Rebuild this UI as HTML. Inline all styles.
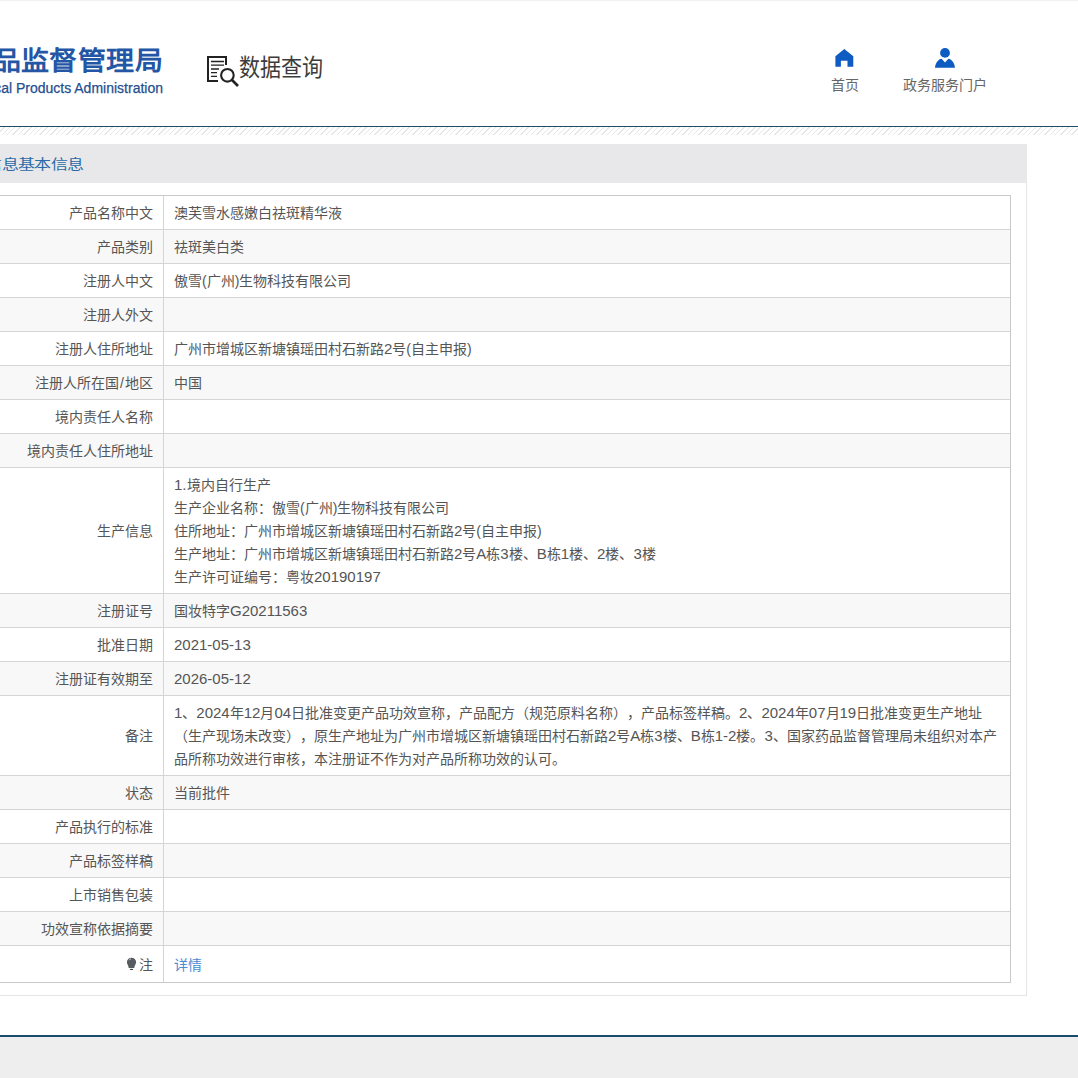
<!DOCTYPE html>
<html lang="zh-CN"><head><meta charset="utf-8">
<style>
*{margin:0;padding:0;box-sizing:border-box}
html,body{width:1078px;height:1078px;overflow:hidden;background:#fff;font-family:"Liberation Sans",sans-serif;text-spacing-trim:space-all;}
.abs{position:absolute}
#logo1{position:absolute;right:915px;top:45.3px;transform:scaleY(.94);white-space:nowrap;font-size:28px;font-weight:bold;color:#2456a6;line-height:34px;letter-spacing:0.4px}
#logo2{position:absolute;right:915px;top:78.5px;white-space:nowrap;font-size:14px;color:#1f4f8f;line-height:18px;-webkit-text-stroke:0.25px #1f4f8f}
#sjcx{position:absolute;left:239px;top:54.7px;font-size:22px;color:#3c3c3c;transform:scale(.957,1.067);transform-origin:0 50%;line-height:28px;white-space:nowrap}
.nav{position:absolute;top:76px;width:120px;text-align:center;font-size:14px;color:#666;line-height:18px;white-space:nowrap}
#hline{position:absolute;left:0;top:126px;width:1078px;height:1px;background:#1f4d66}
#hatch{position:absolute;left:0;top:127px;width:1078px;height:8px;background:repeating-linear-gradient(135deg,#fff 0,#fff 2.6px,#e7e7e7 2.6px,#e7e7e7 3.6px,#fff 3.6px,#fff 3.82px)}
#band{position:absolute;left:0;top:144px;width:1027px;height:39px;background:#e8e8ea}
#bandt{position:absolute;right:994.4px;top:155.3px;font-size:17px;letter-spacing:-0.6px;transform:scaleY(.79);color:#2b6aa6;line-height:20px;white-space:nowrap}
#box{position:absolute;left:-20px;top:183px;width:1047px;height:813px;border:1px solid #e6e6e6;border-top:none}
table{position:absolute;left:-101px;top:195px;width:1112px;border-collapse:collapse;border:1px solid #cfcfcf;font-size:14px;color:#555}
td{border:1px solid #d5d5d5;padding:6px 10px 4px;line-height:23px;white-space:nowrap;vertical-align:middle}
td.l{width:264px;text-align:right}
tr.g td{background:#f8f8f8}
#foot{position:absolute;left:0;top:1035px;width:1078px;height:2px;background:#1b4a6c}
#footg{position:absolute;left:0;top:1037px;width:1078px;height:41px;background:#eeeeee}
a{color:#4a8cd2;text-decoration:none}
.n{font-size:15px;letter-spacing:0;line-height:1px}
</style></head><body>
<div class="abs" style="left:0;top:0;width:1078px;height:1px;background:#f1f1f1"></div>
<div id="logo1">国家药品监督管理局</div>
<div id="logo2">National Medical Products Administration</div>
<svg class="abs" style="left:200px;top:50px" width="45" height="40" viewBox="200 50 45 40">
 <path d="M218 81 H208 V57 H226 V65" fill="none" stroke="#222" stroke-width="2"/>
 <path d="M211 61.5 H224 M211 65.2 H224 M211 69 H219 M211 72.7 H217 M211 76.4 H217" stroke="#222" stroke-width="1.3"/>
 <circle cx="227.4" cy="75.3" r="6.3" fill="none" stroke="#222" stroke-width="2.1"/>
 <path d="M232 80 L238 86" stroke="#222" stroke-width="2.6"/>
</svg>
<div id="sjcx">数据查询</div>
<svg class="abs" style="left:830px;top:44px" width="30" height="28" viewBox="0 0 30 28">
 <path d="M14.3 4.9 L23.3 12.3 V22.7 H17.5 V16.7 H10.9 V22.7 H5.4 V12.3 Z" fill="#0e5bc2"/>
</svg>
<div class="nav" style="left:784.5px">首页</div>
<svg class="abs" style="left:930px;top:44px" width="30" height="28" viewBox="0 0 30 28">
 <circle cx="15" cy="8.9" r="4.9" fill="#0e5bc2"/>
 <path d="M5 23.7 C5.5 18.5 8.5 15.3 11.6 14.8 L15 18.4 L18.4 14.8 C21.5 15.3 24.5 18.5 25 23.7 Z" fill="#0e5bc2"/>
</svg>
<div class="nav" style="left:885px">政务服务门户</div>
<div id="hline"></div>
<div id="hatch"></div>
<div id="band"></div>
<div id="bandt">信息基本信息</div>
<div id="box"></div>
<table>
<tr><td class="l">产品名称中文</td><td>澳芙雪水感嫩白祛斑精华液</td></tr>
<tr class="g"><td class="l">产品类别</td><td>祛斑美白类</td></tr>
<tr><td class="l">注册人中文</td><td>傲雪(广州)生物科技有限公司</td></tr>
<tr class="g"><td class="l">注册人外文</td><td></td></tr>
<tr><td class="l">注册人住所地址</td><td>广州市增城区新塘镇瑶田村石新路<span class="n">2</span>号(自主申报)</td></tr>
<tr class="g"><td class="l">注册人所在国<span style="padding:0 1px">/</span>地区</td><td>中国</td></tr>
<tr><td class="l">境内责任人名称</td><td></td></tr>
<tr class="g"><td class="l">境内责任人住所地址</td><td></td></tr>
<tr><td class="l">生产信息</td><td><span class="n">1.</span>境内自行生产<br>生产企业名称：傲雪(广州)生物科技有限公司<br>住所地址：广州市增城区新塘镇瑶田村石新路<span class="n">2</span>号(自主申报)<br>生产地址：广州市增城区新塘镇瑶田村石新路<span class="n">2</span>号<span class="n">A</span>栋<span class="n">3</span>楼、<span class="n">B</span>栋<span class="n">1</span>楼、<span class="n">2</span>楼、<span class="n">3</span>楼<br>生产许可证编号：粤妆<span class="n">20190197</span></td></tr>
<tr class="g"><td class="l">注册证号</td><td>国妆特字<span class="n">G20211563</span></td></tr>
<tr><td class="l">批准日期</td><td><span class="n">2021-05-13</span></td></tr>
<tr class="g"><td class="l">注册证有效期至</td><td><span class="n">2026-05-12</span></td></tr>
<tr><td class="l">备注</td><td><span class="n">1</span>、<span class="n">2024</span>年<span class="n">12</span>月<span class="n">04</span>日批准变更产品功效宣称，产品配方（规范原料名称），产品标签样稿。<span class="n">2</span>、<span class="n">2024</span>年<span class="n">07</span>月<span class="n">19</span>日批准变更生产地址<br>（生产现场未改变），原生产地址为广州市增城区新塘镇瑶田村石新路<span class="n">2</span>号<span class="n">A</span>栋<span class="n">3</span>楼、<span class="n">B</span>栋<span class="n">1-2</span>楼。<span class="n">3</span>、国家药品监督管理局未组织对本产<br>品所称功效进行审核，本注册证不作为对产品所称功效的认可。</td></tr>
<tr class="g"><td class="l">状态</td><td>当前批件</td></tr>
<tr><td class="l">产品执行的标准</td><td></td></tr>
<tr class="g"><td class="l">产品标签样稿</td><td></td></tr>
<tr><td class="l">上市销售包装</td><td></td></tr>
<tr class="g"><td class="l">功效宣称依据摘要</td><td></td></tr>
<tr><td class="l" style="height:37px"><span style="display:inline-block;width:12px"></span>注</td><td><a>详情</a></td></tr>
</table>
<svg class="abs" style="left:126px;top:957px" width="11" height="14" viewBox="0 0 11 14"><path d="M5.5 0.7 A4.6 4.6 0 0 1 10.1 5.3 C10.1 7.2 8.6 8.2 8.3 10.9 H2.7 C2.4 8.2 0.9 7.2 0.9 5.3 A4.6 4.6 0 0 1 5.5 0.7 Z" fill="#575a5e"/><path d="M3.3 3.2 Q3.8 2.1 4.9 1.8" stroke="#fff" stroke-width="0.9" fill="none" opacity="0.8"/><ellipse cx="5.5" cy="12.4" rx="1.8" ry="0.7" fill="#444"/></svg>
<div class="abs" style="left:-101px;top:195px;width:1112px;height:788px;border:1px solid #c9c9c9"></div>
<div id="foot"></div>
<div id="footg"></div>
</body></html>
